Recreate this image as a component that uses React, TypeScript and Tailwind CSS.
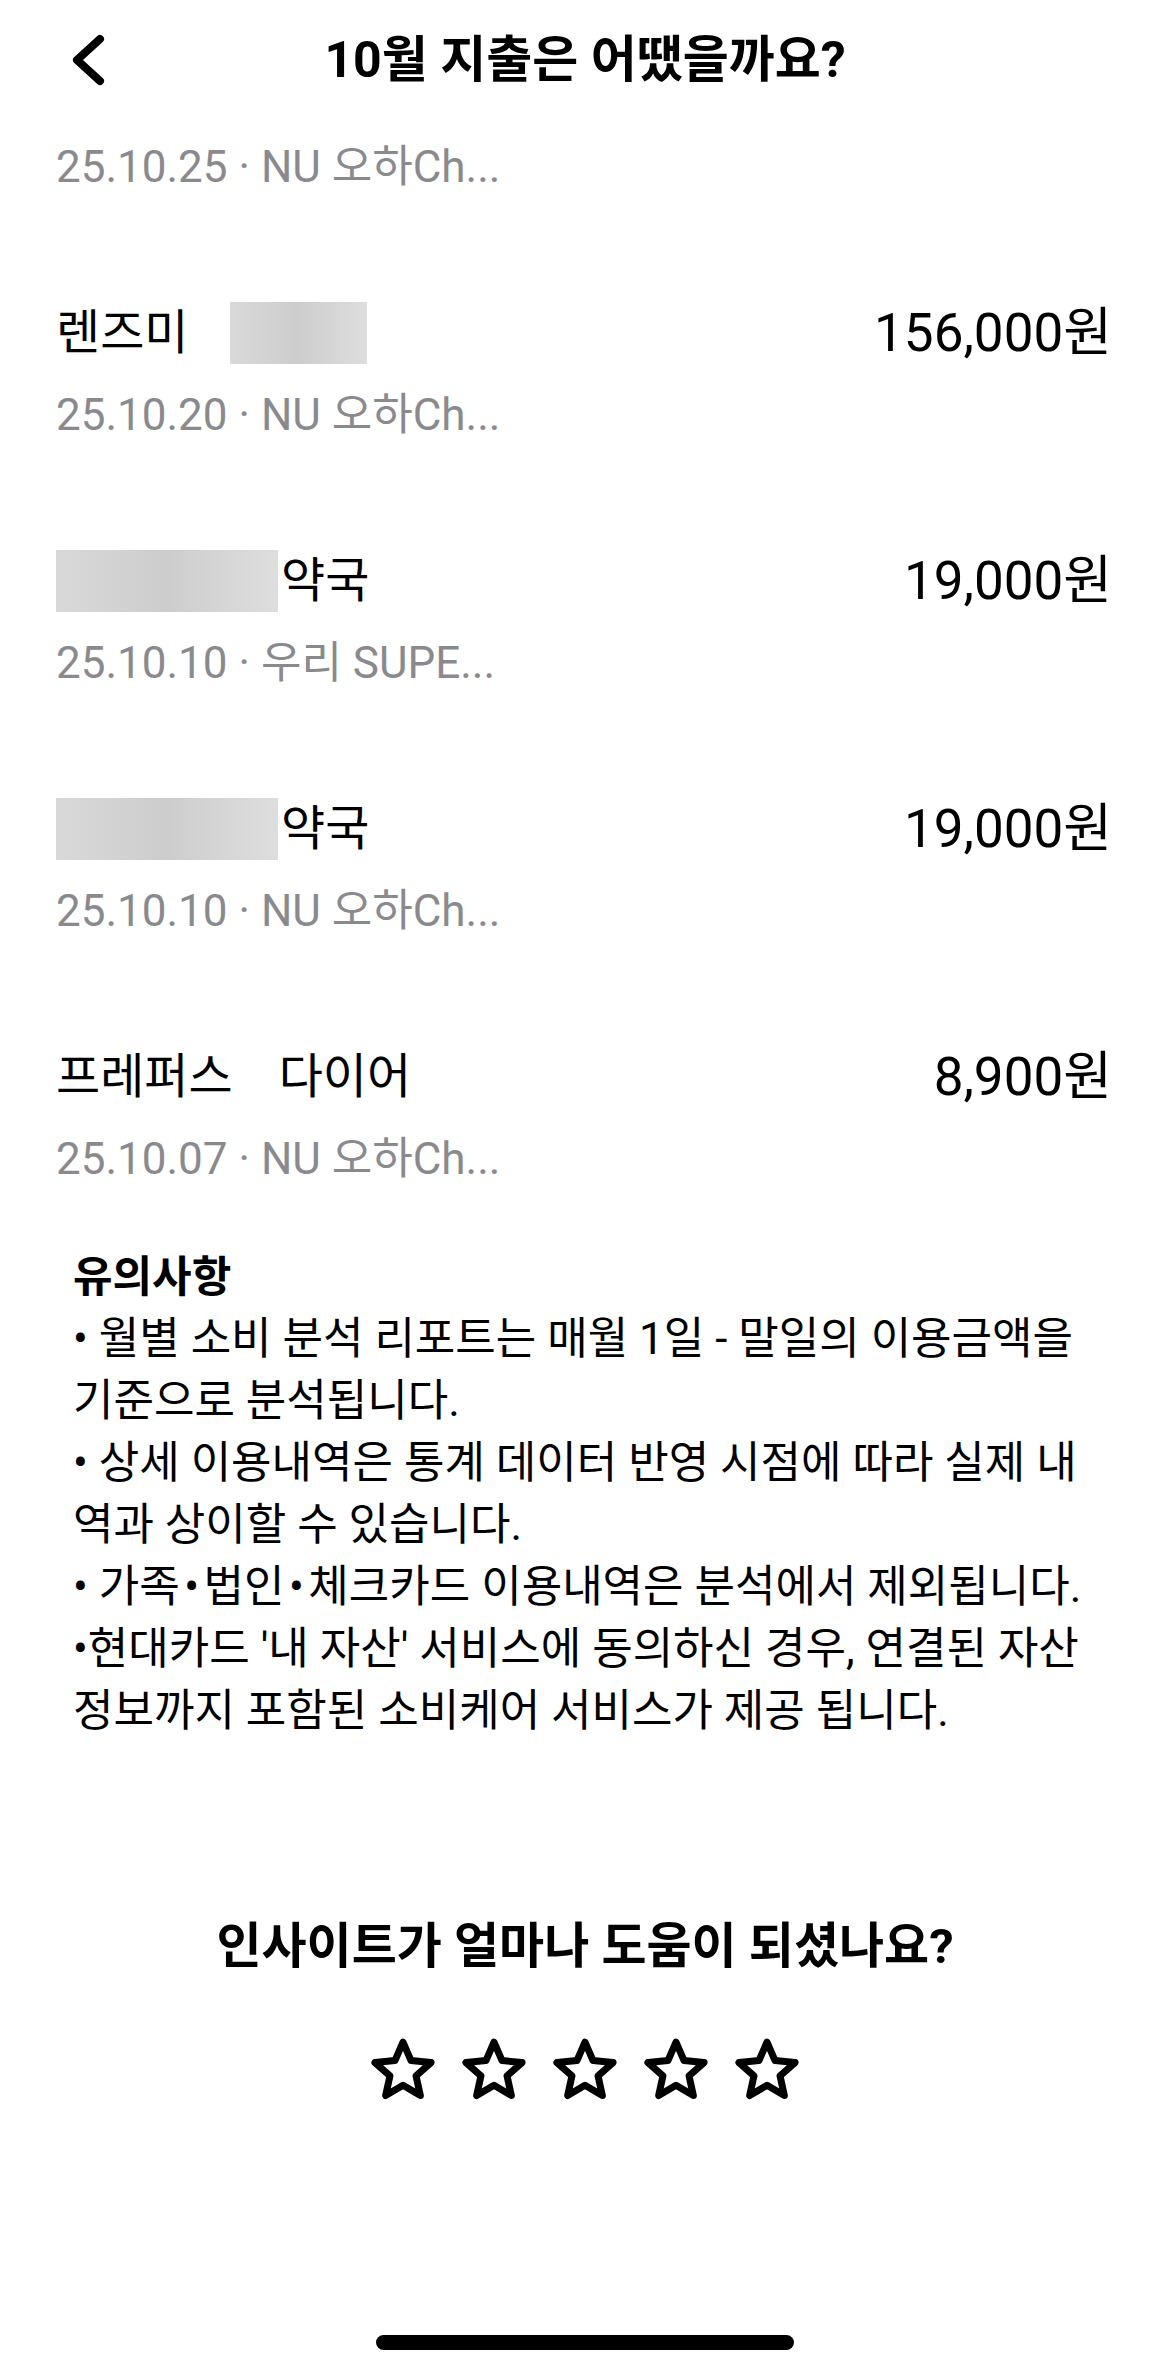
import React from "react";

const FONT = 'Roboto, "Noto Sans CJK KR", sans-serif';

function Star() {
  return (
    <svg width="70" height="70" viewBox="0 0 64 64" fill="none">
      <polygon
        points="32,6.5 39.35,23.39 57.68,25.16 43.89,37.36 47.87,55.34 32,46 16.13,55.34 20.11,37.36 6.32,25.16 24.65,23.39"
        stroke="#000"
        strokeWidth="6.4"
        strokeLinejoin="round"
      />
    </svg>
  );
}

function DateLine({ text }: { text: string }) {
  return (
    <div className="h-[50px] flex items-center text-[44px] leading-none text-[#8a8a8e] whitespace-nowrap">
      {text}
    </div>
  );
}

function Amount({ value }: { value: string }) {
  return <div className="text-[53px] leading-none text-black whitespace-nowrap">{value}</div>;
}

function Blur({ w }: { w: string }) {
  return <div className={`${w} h-[62px] bg-gradient-to-r from-[#d9d9d9] via-[#cdcdcd] to-[#dedede]`} />;
}

export default function App() {
  const notes = [
    "• 월별 소비 분석 리포트는 매월 1일 - 말일의 이용금액을",
    "기준으로 분석됩니다.",
    "• 상세 이용내역은 통계 데이터 반영 시점에 따라 실제 내",
    "역과 상이할 수 있습니다.",
    "• 가족\u200A•\u200A법인\u200A•\u200A체크카드 이용내역은 분석에서 제외됩니다.",
    "•현대카드 '내 자산' 서비스에 동의하신 경우, 연결된 자산",
    "정보까지 포함된 소비케어 서비스가 제공 됩니다.",
  ];
  return (
    <div className="w-[1170px] h-[2374px] bg-white overflow-hidden flex flex-col text-black" style={{ fontFamily: FONT }}>
      {/* Header */}
      <div className="h-[120px] grid grid-cols-[1fr_auto_1fr] items-center">
        <div className="pl-[68px] flex items-center">
          <svg width="40" height="56" viewBox="0 0 40 56" fill="none">
            <polyline points="32,7 9,28 32,49" stroke="#000" strokeWidth="8" strokeLinecap="round" strokeLinejoin="round" />
          </svg>
        </div>
        <div className="text-[50px] font-bold leading-none whitespace-nowrap">10월 지출은 어땠을까요?</div>
        <div />
      </div>

      {/* List */}
      <div className="px-[56px] pr-[58px] flex flex-col">
        <div className="mt-[22px]">
          <DateLine text="25.10.25 · NU 오하Ch..." />
        </div>

        <div className="mt-[111px] h-[60px] flex items-center justify-between">
          <div className="flex items-center">
            <span className="text-[48px] leading-none">렌즈미</span>
            <div className="ml-[42px]"><Blur w="w-[137px]" /></div>
          </div>
          <Amount value="156,000원" />
        </div>
        <div className="mt-[27px]"><DateLine text="25.10.20 · NU 오하Ch..." /></div>

        <div className="mt-[111px] h-[60px] flex items-center justify-between">
          <div className="flex items-center">
            <Blur w="w-[222px]" />
            <span className="ml-[3px] text-[48px] leading-none">약국</span>
          </div>
          <Amount value="19,000원" />
        </div>
        <div className="mt-[27px]"><DateLine text="25.10.10 · 우리 SUPE..." /></div>

        <div className="mt-[111px] h-[60px] flex items-center justify-between">
          <div className="flex items-center">
            <Blur w="w-[222px]" />
            <span className="ml-[3px] text-[48px] leading-none">약국</span>
          </div>
          <Amount value="19,000원" />
        </div>
        <div className="mt-[27px]"><DateLine text="25.10.10 · NU 오하Ch..." /></div>

        <div className="mt-[111px] h-[60px] flex items-center justify-between">
          <div className="flex items-center text-[48px] leading-none">
            <span>프레퍼스</span>
            <span className="ml-[46px]">다이어</span>
          </div>
          <Amount value="8,900원" />
        </div>
        <div className="mt-[27px]"><DateLine text="25.10.07 · NU 오하Ch..." /></div>
      </div>

      {/* Notes */}
      <div className="mt-[62px] pl-[73px] flex flex-col text-[44px] leading-[62px] whitespace-nowrap">
        <div className="font-bold text-[43px]">유의사항</div>
        {notes.map((n, i) => (
          <div key={i}>{n}</div>
        ))}
      </div>

      {/* Rating */}
      <div className="mt-[174px] h-[60px] flex items-center justify-center text-[49px] font-bold leading-none whitespace-nowrap">
        인사이트가 얼마나 도움이 되셨나요?
      </div>
      <div className="mt-[59px] flex justify-center gap-[21px]">
        <Star />
        <Star />
        <Star />
        <Star />
        <Star />
      </div>

      {/* Home indicator */}
      <div className="mt-[230px] flex justify-center">
        <div className="w-[418px] h-[15px] rounded-full bg-black" />
      </div>
    </div>
  );
}
